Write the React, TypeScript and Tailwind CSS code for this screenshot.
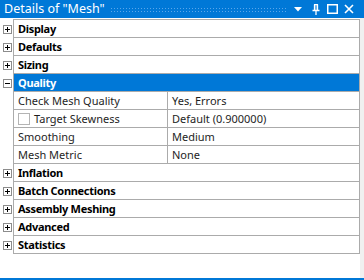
import React from "react";

type Row =
  | { kind: "cat"; label: string; open?: boolean; selected?: boolean }
  | { kind: "prop"; label: string; value: string; check?: boolean };

const rows: Row[] = [
  { kind: "cat", label: "Display" },
  { kind: "cat", label: "Defaults" },
  { kind: "cat", label: "Sizing" },
  { kind: "cat", label: "Quality", open: true, selected: true },
  { kind: "prop", label: "Check Mesh Quality", value: "Yes, Errors" },
  { kind: "prop", label: "Target Skewness", value: "Default (0.900000)", check: true },
  { kind: "prop", label: "Smoothing", value: "Medium" },
  { kind: "prop", label: "Mesh Metric", value: "None" },
  { kind: "cat", label: "Inflation" },
  { kind: "cat", label: "Batch Connections" },
  { kind: "cat", label: "Assembly Meshing" },
  { kind: "cat", label: "Advanced" },
  { kind: "cat", label: "Statistics" },
];

function ExpandBox({ open }: { open?: boolean }) {
  return (
    <div className="relative h-[9px] w-[9px] border border-[#8c8c8c] bg-white">
      <span className="absolute left-[1px] top-[3px] h-[1px] w-[5px] bg-black" />
      {!open && <span className="absolute left-[3px] top-[1px] h-[5px] w-[1px] bg-black" />}
    </div>
  );
}

function TitleBar() {
  return (
    <div className="flex h-[18px] items-center bg-[#0078d7] pl-[4px] pr-[10px] text-white">
      <span className="text-[12.5px] leading-none whitespace-nowrap">Details of "Mesh"</span>
      <div className="mx-[4px] ml-[5px] h-[5px] flex-1 bg-[radial-gradient(circle,#5aa6ea_0.8px,transparent_1px)] bg-[length:3px_3px]" />
      <svg width="8" height="5" viewBox="0 0 8 5" className="ml-[2px]">
        <path d="M0 0H8L4 4.5Z" fill="white" />
      </svg>
      <svg width="8" height="11" viewBox="0 0 8 11" className="ml-[10px]">
        <path d="M2 0.5H6M2.5 0.5V6M5.5 0.5V6M0.5 6.5H7.5M4 6.5V11" stroke="white" strokeWidth="1.3" fill="none" />
        <rect x="2.5" y="0.5" width="3" height="6" fill="white" opacity="0.35" />
      </svg>
      <svg width="11" height="10" viewBox="0 0 11 10" className="ml-[7px]">
        <rect x="0.75" y="0.75" width="9.5" height="8.5" stroke="white" strokeWidth="1.5" fill="none" />
      </svg>
      <svg width="10" height="10" viewBox="0 0 10 10" className="ml-[6px]">
        <path d="M1 1L9 9M9 1L1 9" stroke="white" strokeWidth="1.6" />
      </svg>
    </div>
  );
}

function GridRow({ row }: { row: Row }) {
  if (row.kind === "cat") {
    return (
      <div className="flex h-[18px]">
        <div className="flex w-[13px] items-center justify-start pl-[3px] bg-white">
          <ExpandBox open={row.open} />
        </div>
        <div
          className={`flex flex-1 items-center border-b border-l border-r border-[#ababab] pl-[4px] text-[11px] font-bold leading-none tracking-[-0.3px] ${
            row.selected ? "bg-[#0078d7] text-white" : "bg-white text-black"
          }`}
        >
          {row.label}
        </div>
      </div>
    );
  }
  return (
    <div className="flex h-[18px]">
      <div className="w-[13px] bg-white" />
      <div className="flex flex-1 border-b border-l border-r border-[#ababab] bg-white text-[11px] leading-none text-[#1e1e1e]">
        <div className="flex w-[154px] items-center border-r border-[#ababab] pl-[4px]">
          {row.check && <span className="mr-[4px] h-[12px] w-[12px] border border-[#b4b4b4] bg-white" />}
          {row.label}
        </div>
        <div className="flex flex-1 items-center pl-[4px]">{row.value}</div>
      </div>
    </div>
  );
}

export default function App() {
  return (
    <div
      className="flex h-[280px] w-[364px] flex-col overflow-hidden bg-white"
      style={{ fontFamily: '"Noto Sans", "Liberation Sans", sans-serif' }}
    >
      <TitleBar />
      <div className="flex flex-1">
        <div className="flex flex-1 flex-col pt-[1px]">
          <div className="ml-[13px] h-[1px] bg-[#ababab]" />
          {rows.map((r) => (
            <GridRow key={r.label} row={r} />
          ))}
        </div>
        <div className="w-[4px] bg-[#f0f0f0]" />
      </div>
      <div className="h-[2px] bg-[#0078d7]" />
    </div>
  );
}
